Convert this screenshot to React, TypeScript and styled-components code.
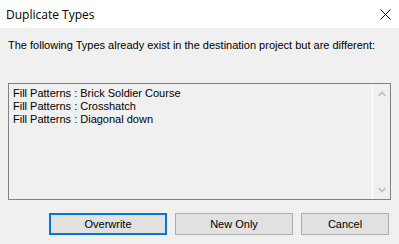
import React from "react";
import styled, { createGlobalStyle } from "styled-components";

const Global = createGlobalStyle`
  html, body { margin: 0; padding: 0; background: #f0f0f0; }
  body { width: 399px; height: 244px; overflow: hidden; }
`;

const Window = styled.div`
  width: 399px;
  height: 244px;
  display: flex;
  flex-direction: column;
  background: #f0f0f0;
  font-family: "Liberation Sans", Arial, sans-serif;
  color: #000;
`;

const TitleBar = styled.div`
  height: 28px;
  background: #fff;
  display: flex;
  align-items: center;
  justify-content: space-between;
  padding: 0 8px 0 6px;
  box-sizing: border-box;
`;

const Title = styled.div`
  font-family: "Open Sans", "Noto Sans", sans-serif;
  font-size: 12px;
  color: #000;
  padding-top: 1px;
`;

const Close = styled.div`
  width: 12px;
  height: 12px;
  display: flex;
  align-items: center;
  justify-content: center;
`;

const Body = styled.div`
  flex: 1;
  display: flex;
  flex-direction: column;
  padding: 11px 8px 0 8px;
`;

const Message = styled.div`
  font-size: 11px;
  line-height: 13px;
  white-space: nowrap;
`;

const ListBox = styled.div`
  margin-top: 31px;
  width: 383px;
  height: 117px;
  box-sizing: border-box;
  border: 1px solid #828282;
  display: flex;
`;

const ListItems = styled.div`
  flex: 1;
  padding: 3px 0 0 4px;
  font-size: 11px;
  line-height: 13px;
  border-right: 1px solid #fff;
`;

const Item = styled.div`
  white-space: nowrap;
`;

const ScrollBar = styled.div`
  width: 17px;
  display: flex;
  flex-direction: column;
  justify-content: space-between;
  align-items: center;
  padding: 7px 0 6px;
  box-sizing: border-box;
`;

const Buttons = styled.div`
  display: flex;
  justify-content: flex-end;
  margin-top: 13px;
  padding-right: 2px;
  gap: 8px;
`;

const Button = styled.div<{ $w: number; $default?: boolean }>`
  width: ${(p) => p.$w}px;
  height: 22px;
  box-sizing: border-box;
  background: #e1e1e1;
  border: ${(p) => (p.$default ? "2px solid #0078d7" : "1px solid #adadad")};
  display: flex;
  align-items: center;
  justify-content: center;
  font-size: 11px;
`;

const Chevron = ({ up }: { up?: boolean }) => (
  <svg width="8" height="6" viewBox="0 0 8 6">
    <path
      d={up ? "M0.5 5 L4 1.5 L7.5 5" : "M0.5 1 L4 4.5 L7.5 1"}
      fill="none"
      stroke="#c0c0c0"
      strokeWidth="1.6"
    />
  </svg>
);

export default function App() {
  return (
    <Window>
      <Global />
      <TitleBar>
        <Title>Duplicate Types</Title>
        <Close>
          <svg width="11" height="11" viewBox="0 0 11 11">
            <path d="M0.5 0.5 L10.5 10.5 M10.5 0.5 L0.5 10.5" stroke="#000" strokeWidth="1" />
          </svg>
        </Close>
      </TitleBar>
      <Body>
        <Message>
          The following Types already exist in the destination project but are different:
        </Message>
        <ListBox>
          <ListItems>
            <Item>Fill Patterns : Brick Soldier Course</Item>
            <Item>Fill Patterns : Crosshatch</Item>
            <Item>Fill Patterns : Diagonal down</Item>
          </ListItems>
          <ScrollBar>
            <Chevron up />
            <Chevron />
          </ScrollBar>
        </ListBox>
        <Buttons>
          <Button $w={118} $default>Overwrite</Button>
          <Button $w={118}>New Only</Button>
          <Button $w={88}>Cancel</Button>
        </Buttons>
      </Body>
    </Window>
  );
}
